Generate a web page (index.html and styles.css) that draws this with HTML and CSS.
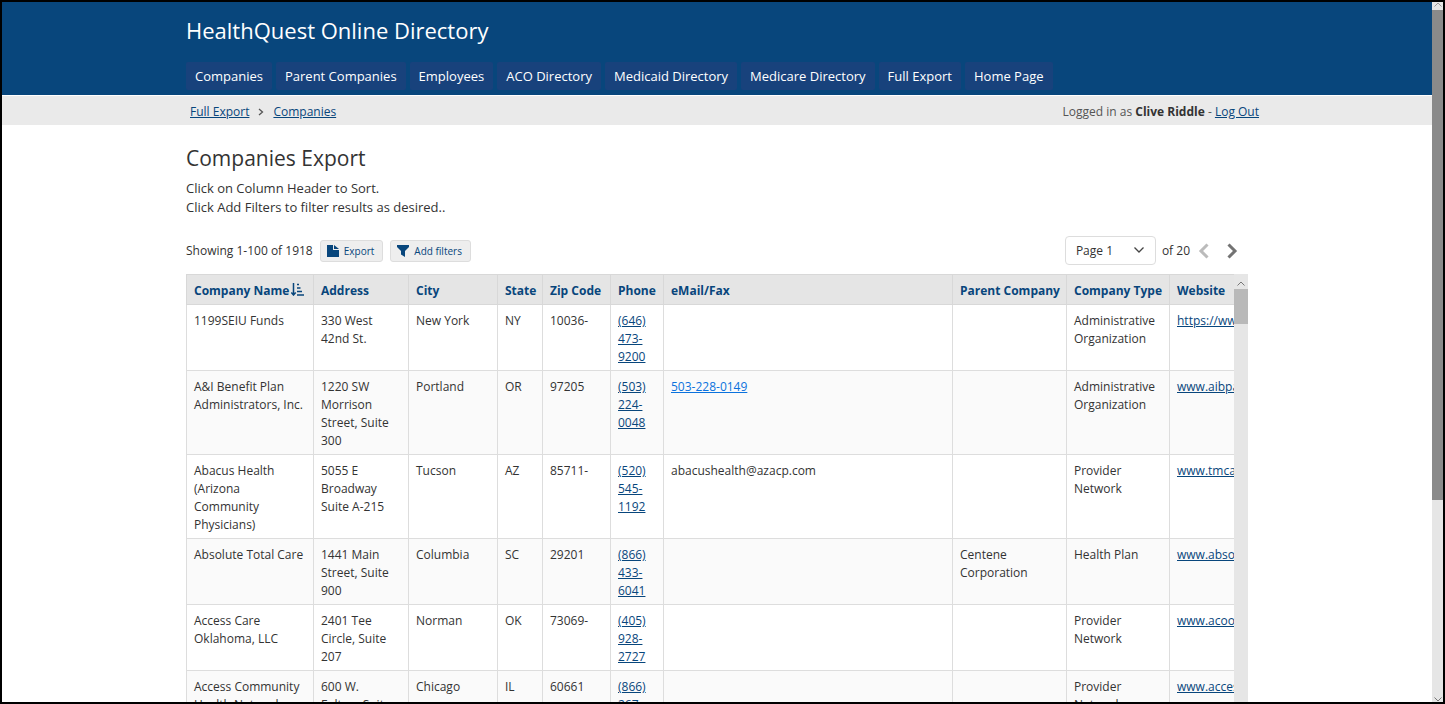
FILE: index.html
```html
<!DOCTYPE html>
<html lang="en">
  <head>
    <meta charset="UTF-8" />
    <meta name="viewport" content="width=device-width, initial-scale=1.0" />
    <title>HealthQuest Online Directory</title>
    <link rel="stylesheet" href="styles.css">
  </head>
  <body>
    <div class="page">
      <header class="header">
        <div class="container">
          <h1 class="site-title">HealthQuest Online Directory</h1>
          <nav class="main-nav">
            <a href="#">Companies</a>
            <a href="#">Parent Companies</a>
            <a href="#">Employees</a>
            <a href="#">ACO Directory</a>
            <a href="#">Medicaid Directory</a>
            <a href="#">Medicare Directory</a>
            <a href="#">Full Export</a>
            <a href="#">Home Page</a>
          </nav>
        </div>
      </header>

      <div class="subbar">
        <div class="subbar-inner">
          <nav class="crumbs">
            <a href="#">Full Export</a>
            <svg width="6" height="8" viewBox="0 0 6 8"><path d="M1 1l3.5 3L1 7" fill="none" stroke="#555" stroke-width="1.3"/></svg>
            <a href="#">Companies</a>
          </nav>
          <div class="login">Logged in as <strong>Clive Riddle</strong> - <a href="#">Log Out</a></div>
        </div>
      </div>

      <main class="container content">
        <h2 class="page-title">Companies Export</h2>
        <p class="intro">Click on Column Header to Sort.<br>Click Add Filters to filter results as desired..</p>

        <div class="toolbar">
          <span>Showing 1-100 of 1918</span>
          <button class="btn" type="button">
            <svg width="12" height="12" viewBox="0 0 12 12"><path d="M0 0h6v5h6v7H0zM7 0l5 4H7z" fill="#08467c"/></svg>
            Export
          </button>
          <button class="btn" type="button">
            <svg width="12" height="12" viewBox="0 0 12 12"><path d="M0 0h12v2L8 6v6L4 9.500V6L0 2z" fill="#08467c"/></svg>
            Add filters
          </button>
          <div class="pager">
            <select class="page-select" aria-label="Page">
              <option>Page 1</option>
              <option>Page 2</option>
              <option>Page 3</option>
            </select>
            <svg class="select-arrow" width="10" height="6" viewBox="0 0 10 6"><path d="M.5.5L5 5 9.500.5" fill="none" stroke="#444" stroke-width="1.3"/></svg>
            <span>of 20</span>
            <button class="page-btn" type="button" aria-label="Previous page" disabled>
              <svg width="11" height="16" viewBox="0 0 11 16"><path d="M9.500 1.500L3 8l6.500 6.500" fill="none" stroke="#bbb" stroke-width="3"/></svg>
            </button>
            <button class="page-btn" type="button" aria-label="Next page">
              <svg width="11" height="16" viewBox="0 0 11 16"><path d="M1.500 1.500L8 8l-6.500 6.500" fill="none" stroke="#737373" stroke-width="3"/></svg>
            </button>
          </div>
        </div>

        <div class="grid">
          <div class="grid-view">
            <table class="companies">
              <colgroup>
                <col class="c-name"><col class="c-address"><col class="c-city"><col class="c-state"><col class="c-zip">
                <col class="c-phone"><col class="c-email"><col class="c-parent"><col class="c-type"><col class="c-web">
              </colgroup>
              <thead>
                <tr>
                  <th>Company Name <svg class="sort" width="13" height="13" viewBox="0 0 13 13"><path d="M2.500 0v12M.3 9.500l2.200 2.500 2.200-2.500M6 1.500h2M6 5h3.500M6 8.500h5M6 12h7" fill="none" stroke="#08467c" stroke-width="1.500"/></svg></th>
                  <th>Address</th>
                  <th>City</th>
                  <th>State</th>
                  <th>Zip Code</th>
                  <th>Phone</th>
                  <th>eMail/Fax</th>
                  <th>Parent Company</th>
                  <th>Company Type</th>
                  <th>Website</th>
                </tr>
              </thead>
              <tbody>
                <tr>
                  <td>1199SEIU Funds</td>
                  <td>330 West 42nd St.</td>
                  <td>New York</td>
                  <td>NY</td>
                  <td>10036-</td>
                  <td><a href="#">(646) 473-<wbr>9200</a></td>
                  <td></td>
                  <td></td>
                  <td>Administrative Organization</td>
                  <td><a href="#">https://www.1199seiu.org</a></td>
                </tr>
                <tr>
                  <td>A&amp;I Benefit Plan Administrators, Inc.</td>
                  <td>1220 SW Morrison Street, Suite 300</td>
                  <td>Portland</td>
                  <td>OR</td>
                  <td>97205</td>
                  <td><a href="#">(503) 224-<wbr>0048</a></td>
                  <td><a class="fax" href="#">503-228-0149</a></td>
                  <td></td>
                  <td>Administrative Organization</td>
                  <td><a href="#">www.aibpa.com</a></td>
                </tr>
                <tr>
                  <td>Abacus Health (Arizona Community Physicians)</td>
                  <td>5055 E Broadway Suite A-215</td>
                  <td>Tucson</td>
                  <td>AZ</td>
                  <td>85711-</td>
                  <td><a href="#">(520) 545-<wbr>1192</a></td>
                  <td>abacushealth@azacp.com</td>
                  <td></td>
                  <td>Provider Network</td>
                  <td><a href="#">www.tmcaz.com</a></td>
                </tr>
                <tr>
                  <td>Absolute Total Care</td>
                  <td>1441 Main Street, Suite 900</td>
                  <td>Columbia</td>
                  <td>SC</td>
                  <td>29201</td>
                  <td><a href="#">(866) 433-<wbr>6041</a></td>
                  <td></td>
                  <td>Centene Corporation</td>
                  <td>Health Plan</td>
                  <td><a href="#">www.absolutetotalcare.com</a></td>
                </tr>
                <tr>
                  <td>Access Care Oklahoma, LLC</td>
                  <td>2401 Tee Circle, Suite 207</td>
                  <td>Norman</td>
                  <td>OK</td>
                  <td>73069-</td>
                  <td><a href="#">(405) 928-<wbr>2727</a></td>
                  <td></td>
                  <td></td>
                  <td>Provider Network</td>
                  <td><a href="#">www.acook.com</a></td>
                </tr>
                <tr>
                  <td>Access Community Health Network</td>
                  <td>600 W.<br>Fulton, Suite 200</td>
                  <td>Chicago</td>
                  <td>IL</td>
                  <td>60661</td>
                  <td><a href="#">(866) 267-<wbr>2353</a></td>
                  <td></td>
                  <td></td>
                  <td>Provider Network</td>
                  <td><a href="#">www.accesscommunityhealth.net</a></td>
                </tr>
              </tbody>
            </table>
          </div>
          <div class="grid-scroll">
            <svg width="8" height="5" viewBox="0 0 8 5"><path d="M.5 4.500L4 1l3.500 3.500" fill="none" stroke="#777"/></svg>
            <div class="grid-thumb"></div>
          </div>
        </div>
      </main>
    </div>

    <div class="page-scroll">
      <svg class="scroll-up" width="8" height="5" viewBox="0 0 8 5"><path d="M.5 4.500L4 1l3.500 3.500" fill="none" stroke="#999"/></svg>
      <div class="page-thumb"></div>
      <svg class="scroll-down" width="8" height="5" viewBox="0 0 8 5"><path d="M.5.5L4 4 7.500.5" fill="none" stroke="#777"/></svg>
    </div>
  </body>
</html>
```
FILE: styles.css
```css
* {
  box-sizing: border-box;
}

body {
  margin: 0;
  height: 100vh;
  display: flex;
  overflow: hidden;
  border: 2px solid #000;
  background: #fff;
  color: #333;
  font-family: "Segoe UI", "Open Sans", sans-serif;
  font-size: 12px;
  line-height: 18px;
}

a {
  color: #08467c;
}

.page {
  flex: 1;
  min-width: 0;
  overflow: hidden;
}

.container {
  max-width: 1062px;
  margin: 0 auto;
}

/* header */
.header {
  background: #08467c;
  padding: 13px 0 5px;
}

.site-title {
  margin: 0 0 17px;
  color: #fff;
  font-size: 22px;
  line-height: 30px;
  font-weight: 400;
}

.main-nav {
  display: flex;
  gap: 4px;
}

.main-nav a {
  padding: 4px 9px;
  border-radius: 2px;
  background: #18427c;
  color: #fff;
  font-size: 13px;
  line-height: 20px;
  text-decoration: none;
}

.subbar {
  margin-top: 1px;
  background: #eaeaea;
}

.subbar-inner {
  display: flex;
  justify-content: space-between;
  max-width: 1086px;
  margin: 0 auto;
  padding: 7px 0 4px 16px;
}

.crumbs {
  display: flex;
  align-items: center;
  gap: 9px;
}

.login {
  padding-right: 1px;
  color: #555;
}

.login strong {
  color: #333;
}

/* page heading */
.page-title {
  margin: 0;
  padding-top: 18px;
  font-size: 21px;
  line-height: 30px;
  font-weight: 400;
}

.intro {
  margin: 6px 0 19px;
  font-size: 13px;
  line-height: 19px;
}

.toolbar {
  display: flex;
  align-items: center;
  gap: 7px;
  margin-bottom: 9px;
}

.btn {
  display: flex;
  align-items: center;
  gap: 5px;
  height: 22px;
  padding: 0 8px 0 6px;
  border: 1px solid #ddd;
  border-radius: 3px;
  background: #eee;
  color: #08467c;
  font: inherit;
  font-size: 10px;
}

.pager {
  position: relative;
  display: flex;
  align-items: center;
  gap: 6px;
  margin-left: auto;
  padding-right: 8px;
}

.page-select {
  appearance: none;
  width: 91px;
  height: 29px;
  padding: 0 10px;
  border: 1px solid #ddd;
  border-radius: 4px;
  background: #fff;
  color: #333;
  font: inherit;
}

.select-arrow {
  position: absolute;
  left: 69px;
  top: 11px;
  pointer-events: none;
}

.page-btn {
  display: flex;
  padding: 0 2px;
  border: 0;
  background: none;
}

.page-btn + .page-btn {
  margin-left: 8px;
}

/* companies table */
.grid {
  display: flex;
}

.grid-view {
  flex: 1;
  min-width: 0;
  overflow: hidden;
}

.companies {
  width: calc(100% + 60px);
  table-layout: fixed;
  border-collapse: collapse;
}

.companies th,
.companies td {
  padding: 7px 7px 4px;
  border: 1px solid #ddd;
  text-align: left;
  vertical-align: top;
}

.companies th {
  border-color: #d8d8d8;
  background: #e5e5e5;
  color: #08467c;
  white-space: nowrap;
}

.companies tbody tr:nth-child(even) {
  background: #fafafa;
}

.companies td:last-child {
  white-space: nowrap;
}

.companies .fax {
  color: #0b72dd;
}

.sort {
  margin-left: -2px;
  vertical-align: -1px;
}

.c-name { width: 127px; }
.c-address { width: 95px; }
.c-city { width: 89px; }
.c-state { width: 45px; }
.c-zip { width: 68px; }
.c-phone { width: 53px; }
.c-parent { width: 114px; }
.c-type { width: 103px; }
.c-web { width: 124px; }

.grid-scroll {
  width: 14px;
  padding-top: 5px;
  background: #e6e6e6;
  text-align: center;
  line-height: 5px;
}

.grid-thumb {
  height: 35px;
  margin-top: 3px;
  background: #b9b9b9;
}

/* window scrollbar */
.page-scroll {
  display: flex;
  flex-direction: column;
  align-items: center;
  width: 11px;
  background: #e6e6e6;
}

.scroll-up {
  margin-bottom: 3px;
}

.page-thumb {
  width: 100%;
  height: 70%;
  background: #8a8a8a;
}

.scroll-down {
  margin-top: auto;
}
```
